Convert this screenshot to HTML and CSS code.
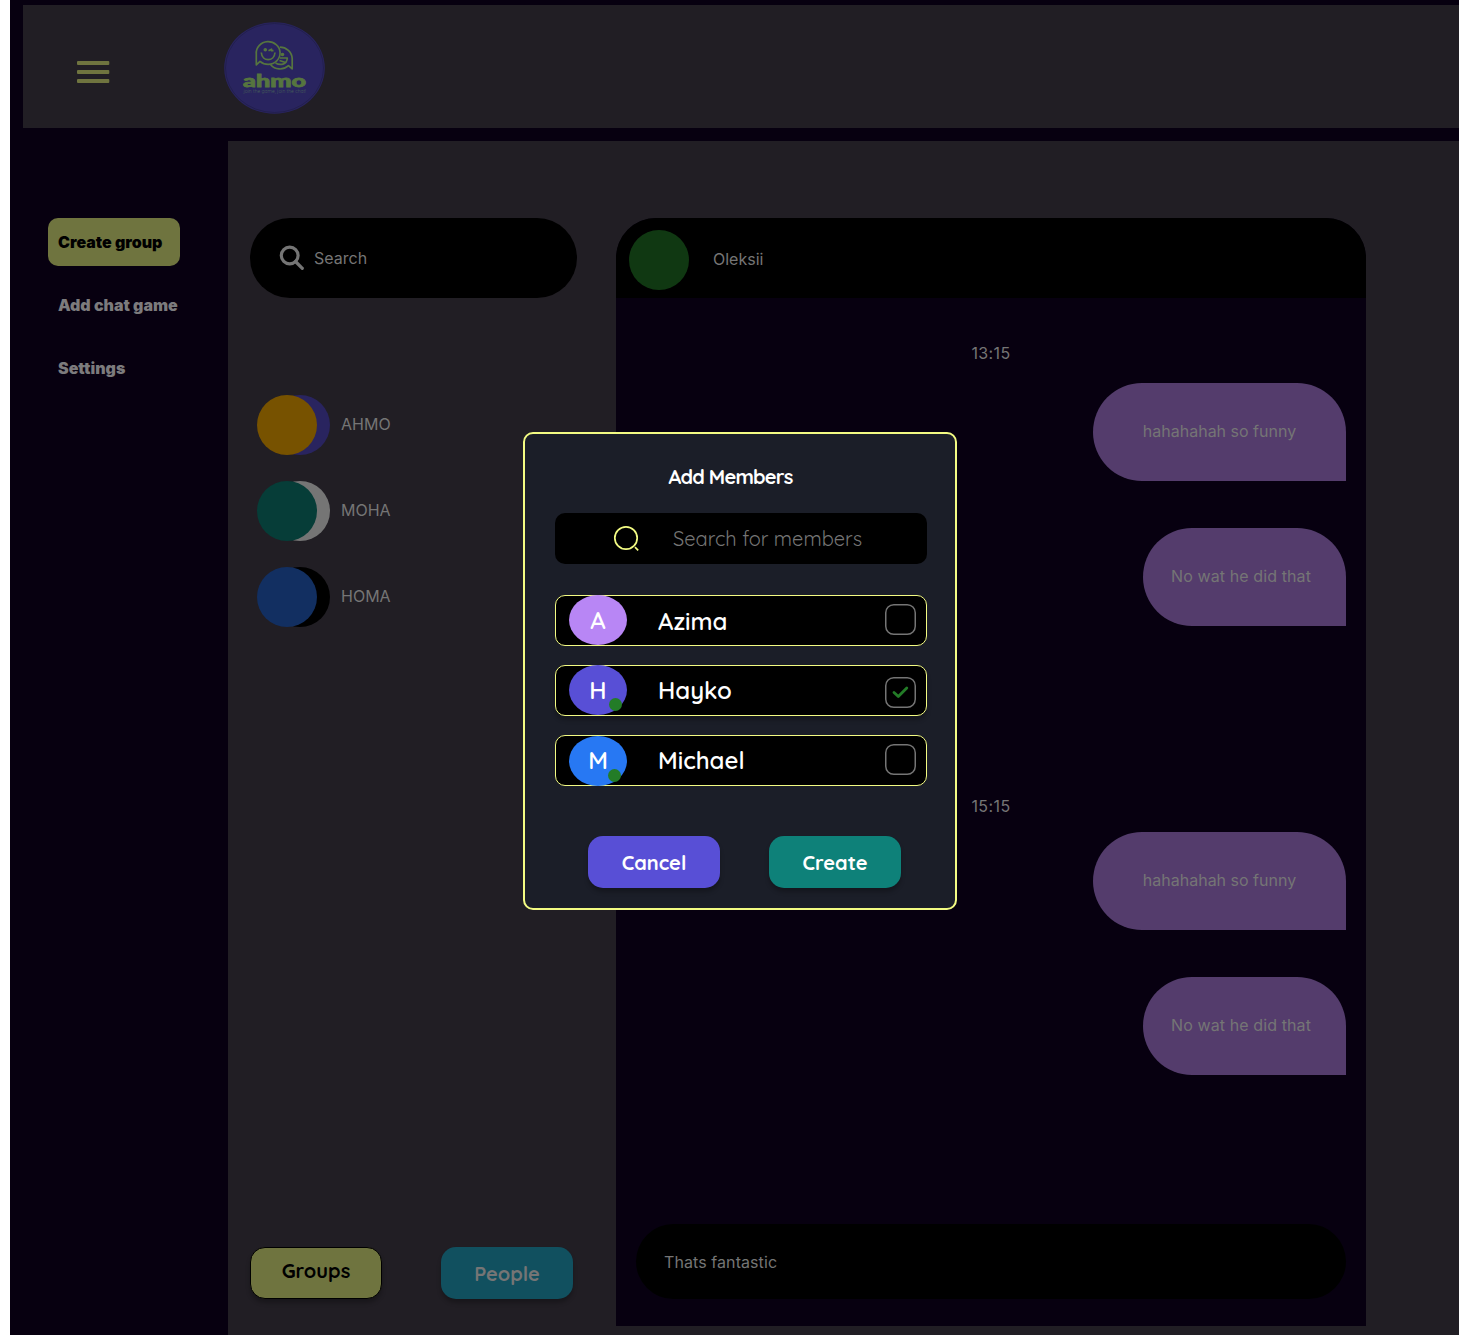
FILE: index.html
```html
<!DOCTYPE html>
<html lang="en">
<head>
<meta charset="utf-8">
<title>ahmo</title>
<link rel="stylesheet" href="styles.css">
</head>
<body>
<div class="app">
  <header class="topbar">
    <svg class="menu" width="34" height="24" viewBox="0 0 34 24" fill="#6f743f"><rect x="1" y="1" width="32.300" height="4" rx="1"/><rect x="1" y="10" width="32.300" height="4" rx="1"/><rect x="1" y="19" width="32.300" height="4" rx="1"/></svg>
    <svg class="logo" width="101" height="92" viewBox="0 0 101 92">
      <ellipse cx="50.5" cy="46" rx="50.3" ry="45.8" fill="#29245f"/>
      <ellipse cx="50.5" cy="46" rx="49" ry="44.5" fill="none" stroke="#211e4a" stroke-width=".8"/>
      <g fill="none" stroke="#56753f" stroke-width="1.7" stroke-linejoin="round">
        <path d="M32.300 42.800V32A11.900 11.300 0 1 1 44.200 42.300C41.500 42.300 38.500 41.500 36 39.300Z"/>
        <path d="M55.800 25.200A12.300 12 0 0 1 68.200 36.500V46.800L64.500 43.700C59 48.500 51 48 46.500 42.500"/>
        <path d="M37.300 30.500C38 40 50.300 40 51 30.500"/>
        <path d="M56 36H63.300C63 43 56 43.500 51.500 41M55.500 38.500 61.500 40.500M44.500 28.700 47.500 27.200V28.700H49.500"/>
      </g>
      <circle cx="41.300" cy="27.700" r="1.800" fill="#56753f"/><circle cx="58.500" cy="32.500" r="1.800" fill="#56753f"/>
      <text class="logo-name" x="19" y="64.700" textLength="63" lengthAdjust="spacingAndGlyphs">ahmo</text>
      <text class="logo-tag" x="19.500" y="71.300" textLength="62.500" lengthAdjust="spacingAndGlyphs">join the game, join the chat!</text>
    </svg>
  </header>
  <div class="content">
    <nav class="sidebar">
      <a class="nav-item nav-active">Create group</a>
      <a class="nav-item">Add chat game</a>
      <a class="nav-item">Settings</a>
    </nav>
    <main class="main">
      <section class="contacts">
        <div class="search">
          <svg width="26" height="26" viewBox="0 0 26 26" fill="none" stroke="#757575" stroke-width="3.200"><circle cx="10.700" cy="10.500" r="8.400"/><path d="M16.500 16.500 23.300 23.300" stroke-linecap="round"/></svg>
          <span>Search</span>
        </div>
        <ul class="groups">
          <li><span class="pair"><i class="disc amber"></i><i class="disc back indigo"></i></span><span class="label">AHMO</span></li>
          <li><span class="pair"><i class="disc teal"></i><i class="disc back gray"></i></span><span class="label">MOHA</span></li>
          <li><span class="pair"><i class="disc blue"></i><i class="disc back black"></i></span><span class="label">HOMA</span></li>
        </ul>
        <div class="tabs">
          <button class="btn btn-groups">Groups</button>
          <button class="btn btn-people">People</button>
        </div>
      </section>
      <section class="chat">
        <div class="chat-head"><i class="disc green"></i><span class="label">Oleksii</span></div>
        <div class="chat-body">
          <time>13:15</time>
          <p class="bubble wide first">hahahahah so funny</p>
          <p class="bubble">No wat he did that</p>
          <time class="later">15:15</time>
          <p class="bubble wide second">hahahahah so funny</p>
          <p class="bubble">No wat he did that</p>
          <div class="composer">Thats fantastic</div>
        </div>
      </section>
    </main>
  </div>
  <div class="modal" role="dialog">
    <h2>Add Members</h2>
    <div class="member-search">
      <svg width="28" height="28" viewBox="0 0 28 28" fill="none" stroke="#f3fb83" stroke-width="1.700"><circle cx="13" cy="13" r="11.200"/><path d="M22 22.200 25.200 25.300"/></svg>
      <span>Search for members</span>
    </div>
    <div class="members">
      <div class="member">
        <span class="avatar lilac">A</span><span class="name name-low">Azima</span>
        <svg class="check" viewBox="0 0 31 31"><rect class="box" x=".75" y=".75" width="29.500" height="29.500" rx="8"/></svg>
      </div>
      <div class="member shadow">
        <span class="avatar violet">H<i class="online"></i></span><span class="name">Hayko</span>
        <svg class="check check-on" viewBox="0 0 31 31"><rect class="box" x=".75" y=".75" width="29.500" height="29.500" rx="8"/><path class="tick" d="M9 15.500 13.300 19.500 21.800 11"/></svg>
      </div>
      <div class="member">
        <span class="avatar azure">M<i class="online online-m"></i></span><span class="name">Michael</span>
        <svg class="check" viewBox="0 0 31 31"><rect class="box" x=".75" y=".75" width="29.500" height="29.500" rx="8"/></svg>
      </div>
    </div>
    <div class="actions">
      <button class="btn btn-cancel">Cancel</button>
      <button class="btn btn-create">Create</button>
    </div>
  </div>
</div>
</body>
</html>
```
FILE: styles.css
```css
* { box-sizing: border-box; }
body { margin: 0; background: #fff; font: 16px/20px Inter, "Liberation Sans", sans-serif; color: #757575; }
.app { position: relative; margin-left: 10px; height: 1335px; padding-top: 5px; background: #070010; overflow: hidden; }
.topbar { margin-left: 13px; height: 123px; background: #211e24; display: flex; align-items: flex-start; }
.menu { margin: 55px 0 0 53px; }
.logo { margin: 17px 0 0 114px; }
.logo-name { font: 900 17.5px Lato, sans-serif; fill: #56753f; stroke: #56753f; stroke-width: .8px; }
.logo-tag { font: 400 5px Quicksand, sans-serif; fill: #48605a; }
.content { display: flex; margin-top: 13px; height: 1194px; }
.sidebar { width: 218px; padding: 77px 0 0 38px; display: flex; flex-direction: column; align-items: flex-start; gap: 15px; }
.nav-item { height: 48px; width: 140px; padding: 14px 10px; font-weight: 900; white-space: nowrap; color: #7c7b7d; }
.nav-active { width: 132px; background: #6f743f; color: #000; border-radius: 10px; }
.main { flex: 1; display: flex; background: #211e24; padding-top: 77px; }
.contacts { width: 388px; padding: 0 0 36px 22px; display: flex; flex-direction: column; }
.search { width: 327px; height: 80px; border-radius: 40px; background: #000; display: flex; align-items: center; gap: 9px; padding-left: 29px; }
.groups { list-style: none; margin: 97px 0 0 7px; padding: 0; display: flex; flex-direction: column; gap: 26px; }
.groups li { display: flex; align-items: center; gap: 11px; }
.label { padding-bottom: 2px; }
.pair { display: flex; width: 73px; }
.disc { width: 60px; height: 60px; border-radius: 50%; flex: none; z-index: 1; }
.back { margin-left: -47px; z-index: 0; }
.amber { background: #775200; }
.indigo { background: #29245f; }
.teal { background: #063d38; }
.gray { background: #757575; }
.blue { background: #122f61; }
.black { background: #000; }
.green { background: #103812; }
.tabs { margin-top: auto; display: flex; gap: 59px; }
.btn { width: 132px; height: 52px; border: 0; border-radius: 15px; padding: 1px 0 0; font: 700 20px/26px Quicksand, Lato, sans-serif; color: #fff; box-shadow: 0 4px 4px rgba(0,0,0,.25); white-space: nowrap; }
.btn-groups { background: #6f743f; color: #000; border: 1px solid #000; padding: 0 0 5px; }
.btn-people { background: #11505f; color: #757575; }
.chat { width: 750px; height: 1108px; background: #070010; border-radius: 40px 40px 0 0; display: flex; flex-direction: column; }
.chat-head { height: 80px; border-radius: 40px 40px 0 0; background: #000; display: flex; align-items: center; gap: 24px; padding: 4px 0 0 13px; }
.chat-body { flex: 1; display: flex; flex-direction: column; padding: 45px 20px 27px; align-items: flex-end; }
time { align-self: center; letter-spacing: .4px; }
.later { margin-top: 170px; }
.bubble { width: 203px; height: 98px; margin: 47px 0 0; border-radius: 49px 49px 0 49px; background: #543c6c; display: flex; align-items: center; justify-content: center; letter-spacing: .1px; padding: 0 7px 2px 0; }
.wide { width: 253px; padding-right: 0; letter-spacing: 0; }
.first { margin-top: 20px; }
.second { margin-top: 16px; }
.composer { margin-top: auto; align-self: stretch; height: 75px; border-radius: 38px; background: #000; display: flex; align-items: center; padding: 0 28px; letter-spacing: .08px; }
.modal { position: absolute; z-index: 2; left: 513px; top: 432px; width: 434px; height: 478px; border: 2px solid #f3fb83; border-radius: 10px; background: #1b1e28; padding: 30px 28px 0 30px; font-family: Quicksand, Lato, sans-serif; color: #fff; }
.modal h2 { margin: 0 0 23px; font-size: 20px; line-height: 26px; font-weight: 700; letter-spacing: -.8px; text-align: center; padding-right: 21px; }
.member-search { height: 51px; border-radius: 10px; background: #000; display: flex; align-items: center; padding-left: 58px; gap: 32px; font-size: 20px; font-weight: 400; color: #757575; }
.members { margin-top: 31px; display: flex; flex-direction: column; gap: 19px; }
.member { height: 51px; border: 1px solid #f3fb83; border-radius: 10px; background: #000; display: flex; align-items: flex-start; padding: 0 10px 0 13px; }
.shadow { box-shadow: 0 4px 4px rgba(0,0,0,.25); }
.avatar { position: relative; width: 58px; height: 50px; margin-top: -1px; border-radius: 50%; display: flex; align-items: center; justify-content: center; font-size: 24px; font-weight: 600; }
.lilac { background: #b886f5; }
.violet { background: #584fd6; }
.azure { margin-top: 0; padding-bottom: 2px; background: #2778f3; }
.online { position: absolute; left: 40px; top: 33px; width: 13px; height: 13px; border-radius: 50%; background: #237c27; }
.online-m { left: 39px; }
.name { margin-left: 31px; font-size: 24px; line-height: 49px; font-weight: 600; }
.name-low { padding-top: 1px; }
.check { margin: 8px 0 0 auto; width: 31px; height: 31px; fill: none; }
.check-on { margin-top: 11px; }
.box { stroke: #757575; stroke-width: 1.5px; }
.tick { stroke: #237c27; stroke-width: 2.8px; stroke-linecap: round; stroke-linejoin: round; }
.actions { display: flex; gap: 49px; margin: 50px 0 0 33px; }
.btn-cancel { background: #584fd6; }
.btn-create { background: #0e8179; }
```
